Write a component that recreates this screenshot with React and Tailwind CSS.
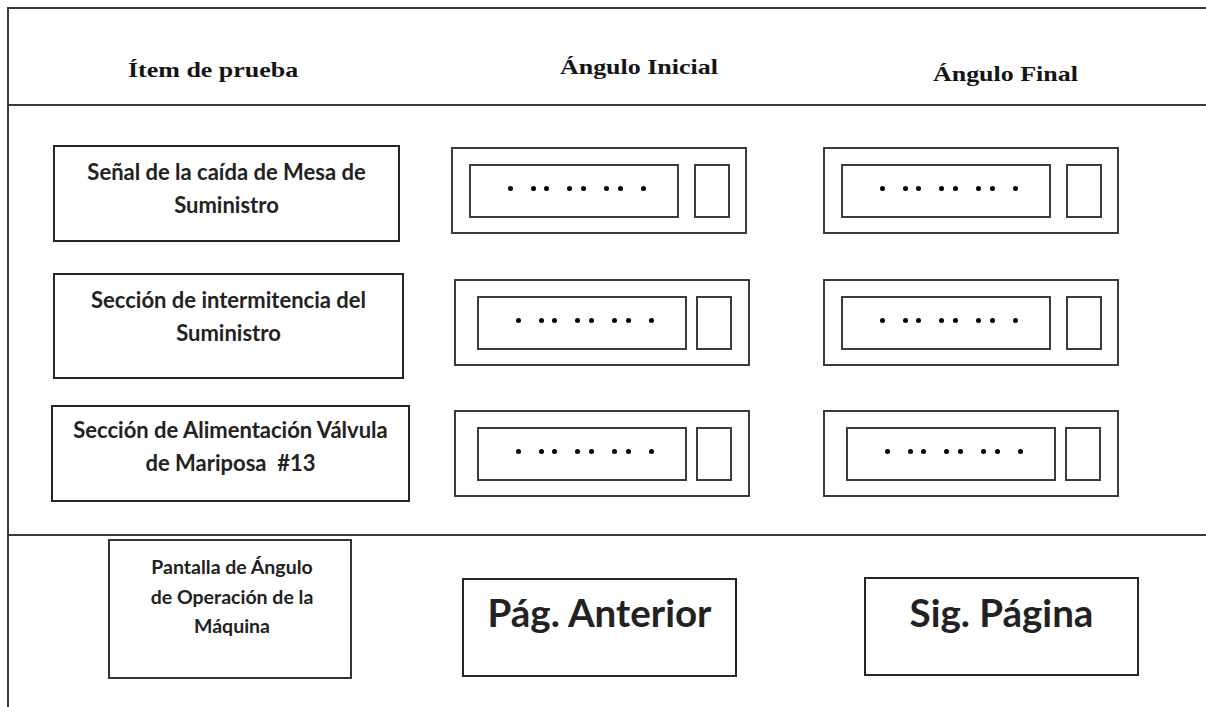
import React from "react";

function Dot() {
  return <span className="block w-[5px] h-[5px] rounded-full bg-black" />;
}

function Dots() {
  return (
    <div className="flex items-center gap-[18px]">
      <Dot />
      <span className="flex gap-[8px]">
        <Dot />
        <Dot />
      </span>
      <span className="flex gap-[9px]">
        <Dot />
        <Dot />
      </span>
      <span className="flex gap-[9px]">
        <Dot />
        <Dot />
      </span>
      <Dot />
    </div>
  );
}

function AngleBox({ variant, className }) {
  const wide = variant === "a";
  return (
    <div
      className={
        "w-[296px] h-[87px] shrink-0 border-2 border-[#3c3c3c] flex items-center " +
        (wide ? "pl-[16px] " : "pl-[21px] ") +
        className
      }
    >
      <div className="w-[210px] h-[54px] border-2 border-[#3c3c3c] flex items-center justify-center pl-[6px] pb-[5px]">
        <Dots />
      </div>
      <div
        className={
          "w-[36px] h-[54px] border-2 border-[#3c3c3c] " +
          (wide ? "ml-[15px]" : "ml-[9px]")
        }
      />
    </div>
  );
}

function LabelBox({ className, children }) {
  return (
    <div
      className={
        "shrink-0 border-2 border-[#262626] text-center font-['Lato',sans-serif] font-bold text-[22px] leading-[33px] text-[#222222] " +
        className
      }
    >
      {children}
    </div>
  );
}

export default function App() {
  return (
    <div className="w-[1206px] h-[707px] bg-white overflow-hidden pl-[7px] pt-[7px]">
      <div className="h-full border-l-2 border-t-2 border-[#3a3a3a] flex flex-col">
        {/* Header */}
        <div className="h-[97px] shrink-0 border-b-2 border-[#3a3a3a] flex items-start font-['Liberation_Serif',serif] font-bold text-[22px] leading-[26px] text-[#151515]">
          <div className="w-[409px] pt-[48px] text-center">
            <span className="inline-block scale-x-[1.18]">Ítem de prueba</span>
          </div>
          <div className="w-[442px] pt-[45px] text-center">
            <span className="inline-block scale-x-[1.18]">Ángulo Inicial</span>
          </div>
          <div className="w-[290px] pt-[52px] text-center">
            <span className="inline-block scale-x-[1.18]">Ángulo Final</span>
          </div>
        </div>

        {/* Body */}
        <div className="h-[428px] shrink-0 pt-[39px] flex flex-col">
          <div className="flex items-start">
            <LabelBox className="ml-[44px] w-[347px] h-[97px] pt-[8px]">
              Señal de la caída de Mesa de
              <br />
              Suministro
            </LabelBox>
            <AngleBox variant="a" className="ml-[51px] mt-[2px]" />
            <AngleBox variant="a" className="ml-[76px] mt-[2px]" />
          </div>

          <div className="flex items-start mt-[31px]">
            <LabelBox className="ml-[44px] w-[351px] h-[106px] pt-[8px]">
              Sección de intermitencia del
              <br />
              Suministro
            </LabelBox>
            <AngleBox variant="b" className="ml-[50px] mt-[6px]" />
            <AngleBox variant="a" className="ml-[73px] mt-[6px]" />
          </div>

          <div className="flex items-start mt-[26px]">
            <LabelBox className="ml-[42px] w-[359px] h-[97px] pt-[6px]">
              Sección de Alimentación Válvula
              <br />
              de Mariposa&nbsp; #13
            </LabelBox>
            <AngleBox variant="b" className="ml-[44px] mt-[5px]" />
            <AngleBox variant="b" className="ml-[73px] mt-[5px]" />
          </div>
        </div>

        {/* Footer */}
        <div className="flex-1 border-t-2 border-[#3a3a3a] flex items-start">
          <div className="ml-[99px] mt-[3px] w-[244px] h-[140px] shrink-0 border-2 border-[#333333] pt-[11px] pl-[4px] text-center font-['Lato',sans-serif] font-bold text-[19.5px] leading-[29.5px] text-[#222222]">
            Pantalla de Ángulo
            <br />
            de Operación de la
            <br />
            Máquina
          </div>
          <div className="ml-[110px] mt-[42px] w-[275px] h-[99px] shrink-0 border-2 border-[#262626] pt-[9px] text-center font-['Lato',sans-serif] font-bold text-[38.5px] leading-[46px] text-[#222222]">
            Pág. Anterior
          </div>
          <div className="ml-[127px] mt-[41px] w-[275px] h-[99px] shrink-0 border-2 border-[#262626] pt-[10px] text-center font-['Lato',sans-serif] font-bold text-[38.5px] leading-[46px] text-[#222222]">
            Sig. Página
          </div>
        </div>
      </div>
    </div>
  );
}
